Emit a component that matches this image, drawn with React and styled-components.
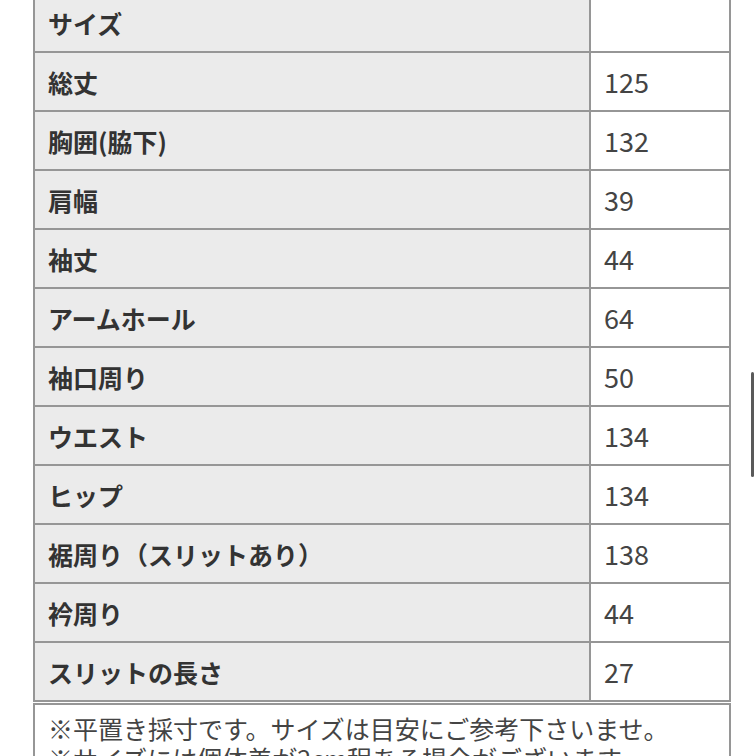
import React from "react";
import styled, { createGlobalStyle } from "styled-components";

const GlobalStyle = createGlobalStyle`
  html, body {
    margin: 0;
    padding: 0;
    background: #fff;
  }
  body {
    font-family: "Noto Sans CJK JP", "Noto Sans", sans-serif;
    overflow: hidden;
    height: 756px;
  }
`;

const Page = styled.div`
  position: relative;
  width: 756px;
  height: 756px;
  overflow: hidden;
`;

const Content = styled.div`
  margin-top: -8px;
  margin-left: 33px;
  width: 698px;
`;

const Table = styled.div`
  border: 2px solid #969696;
  border-bottom: none;
`;

const Row = styled.div`
  display: grid;
  grid-template-columns: 556px 1fr;
  height: 59px;
  box-sizing: border-box;
  border-bottom: 2px solid #969696;
`;

const Label = styled.div`
  display: flex;
  align-items: center;
  padding-left: 13px;
  background: #ebebeb;
  border-right: 2px solid #969696;
  font-size: 25px;
  font-weight: 700;
  color: #333;
  white-space: nowrap;
`;

const Value = styled.div`
  display: flex;
  align-items: center;
  padding-left: 13px;
  background: #fff;
  font-size: 27px;
  color: #444;
`;

const Note = styled.div`
  margin-top: 1px;
  border: 2px solid #969696;
  padding: 8px 13px 0;
  font-size: 25px;
  line-height: 30px;
  color: #444;
  white-space: nowrap;
  overflow: hidden;
`;

const Scrollbar = styled.div`
  position: absolute;
  right: 2px;
  top: 372px;
  width: 3px;
  height: 105px;
  border-radius: 2px;
  background: #5a5a5a;
`;

const rows = [
  ["サイズ", ""],
  ["総丈", "125"],
  ["胸囲(脇下)", "132"],
  ["肩幅", "39"],
  ["袖丈", "44"],
  ["アームホール", "64"],
  ["袖口周り", "50"],
  ["ウエスト", "134"],
  ["ヒップ", "134"],
  ["裾周り（スリットあり）", "138"],
  ["衿周り", "44"],
  ["スリットの長さ", "27"],
];

export default function App() {
  return (
    <Page>
      <GlobalStyle />
      <Content>
        <Table>
          {rows.map(([label, value]) => (
            <Row key={label}>
              <Label>{label}</Label>
              <Value>{value}</Value>
            </Row>
          ))}
        </Table>
        <Note>
          ※平置き採寸です。サイズは目安にご参考下さいませ。
          <br />
          ※サイズには個体差が2cm程ある場合がございます。
        </Note>
      </Content>
      <Scrollbar />
    </Page>
  );
}
